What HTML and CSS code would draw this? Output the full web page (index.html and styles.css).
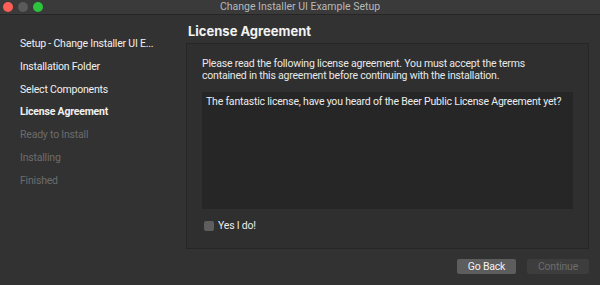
FILE: index.html
```html
<!DOCTYPE html>
<html lang="en">
<head>
    <meta charset="UTF-8">
    <title>Change Installer UI Example Setup</title>
    <link rel="stylesheet" href="styles.css">
</head>
<body>
    <div class="window">
        <div class="titlebar">
            <div class="lights">
                <span class="light red"></span>
                <span class="light gray"></span>
                <span class="light green"></span>
            </div>
            <div class="title">Change Installer UI Example Setup</div>
        </div>
        <div class="main">
            <ul class="steps">
                <li>Setup - Change Installer UI E...</li>
                <li>Installation Folder</li>
                <li>Select Components</li>
                <li class="current">License Agreement</li>
                <li class="todo">Ready to Install</li>
                <li class="todo">Installing</li>
                <li class="todo">Finished</li>
            </ul>
            <div class="page">
                <h1>License Agreement</h1>
                <div class="panel">
                    <p class="intro">Please read the following license agreement. You must accept the terms contained in this agreement before continuing with the installation.</p>
                    <div class="license">The fantastic license, have you heard of the Beer Public License Agreement yet?</div>
                    <label class="accept">
                        <span class="box"></span>
                        Yes I do!
                    </label>
                </div>
                <div class="buttons">
                    <button class="btn">Go Back</button>
                    <button class="btn disabled">Continue</button>
                </div>
            </div>
        </div>
    </div>
</body>
</html>
```

FILE: styles.css
```css
body {
    margin: 0;
    background-color: #323232;
    font-family: Roboto, "Liberation Sans", sans-serif;
    font-size: 10.5px;
    letter-spacing: -0.2px;
    color: #e6e6e6;
}

.window {
    width: 600px;
    height: 285px;
    overflow: hidden;
}

.titlebar {
    height: 14px;
    background-color: #3a3a3a;
    border-bottom: 1px solid #262626;
    position: relative;
}

.lights {
    position: absolute;
    left: 3px;
    top: 2px;
    display: flex;
    gap: 5px;
}

.light {
    width: 10px;
    height: 10px;
    border-radius: 50%;
}

.red {
    background-color: #fe5f57;
}

.gray {
    background-color: #5a5a5a;
}

.green {
    background-color: #2cc53d;
}

.title {
    text-align: center;
    letter-spacing: 0;
    line-height: 14px;
    color: #b8b8b8;
}

.main {
    display: flex;
}

/* 왼쪽 단계 목록 */
.steps {
    list-style: none;
    margin: 0;
    padding: 22px 0 0 20px;
    width: 166px;
}

.steps li {
    height: 22.8px;
    line-height: 14px;
    color: #f0f0f0;
}

.steps .current {
    font-weight: bold;
}

.steps .todo {
    color: #6c6c6c;
}

.page {
    width: 403px;
}

h1 {
    margin: 0;
    padding: 9px 0 0 2px;
    height: 19px;
    font-family: Inter, "Liberation Sans", sans-serif;
    font-size: 13px;
    letter-spacing: 0;
    line-height: 14px;
    color: #f2f2f2;
}

.panel {
    height: 204px;
    background-color: #2f2f2f;
    border: 1px solid #262626;
    padding: 0 15px;
}

.intro {
    margin: 14px 0 0 0;
    max-width: 340px;
    line-height: 12px;
    color: #e8e8e8;
}

.license {
    margin-top: 10px;
    height: 111px;
    background-color: #262626;
    padding: 3px 4px;
    line-height: 14px;
    color: #ececec;
}

.accept {
    display: flex;
    align-items: center;
    gap: 4px;
    margin-top: 10px;
    color: #ececec;
}

.box {
    width: 10px;
    height: 10px;
    border-radius: 2px;
    background-color: #5e5e5e;
    margin-left: 2px;
}

.buttons {
    display: flex;
    justify-content: flex-end;
    gap: 11px;
    margin-top: 10px;
}

.btn {
    height: 15px;
    padding: 0;
    width: 59px;
    border: none;
    border-radius: 2px;
    background-color: #5d5d5d;
    color: #f2f2f2;
    font-family: Roboto, "Liberation Sans", sans-serif;
    font-size: 10.5px;
    letter-spacing: -0.2px;
    line-height: 15px;
}

.btn.disabled {
    width: 62px;
    background-color: #3d3d3d;
    color: #6c6c6c;
}
```
